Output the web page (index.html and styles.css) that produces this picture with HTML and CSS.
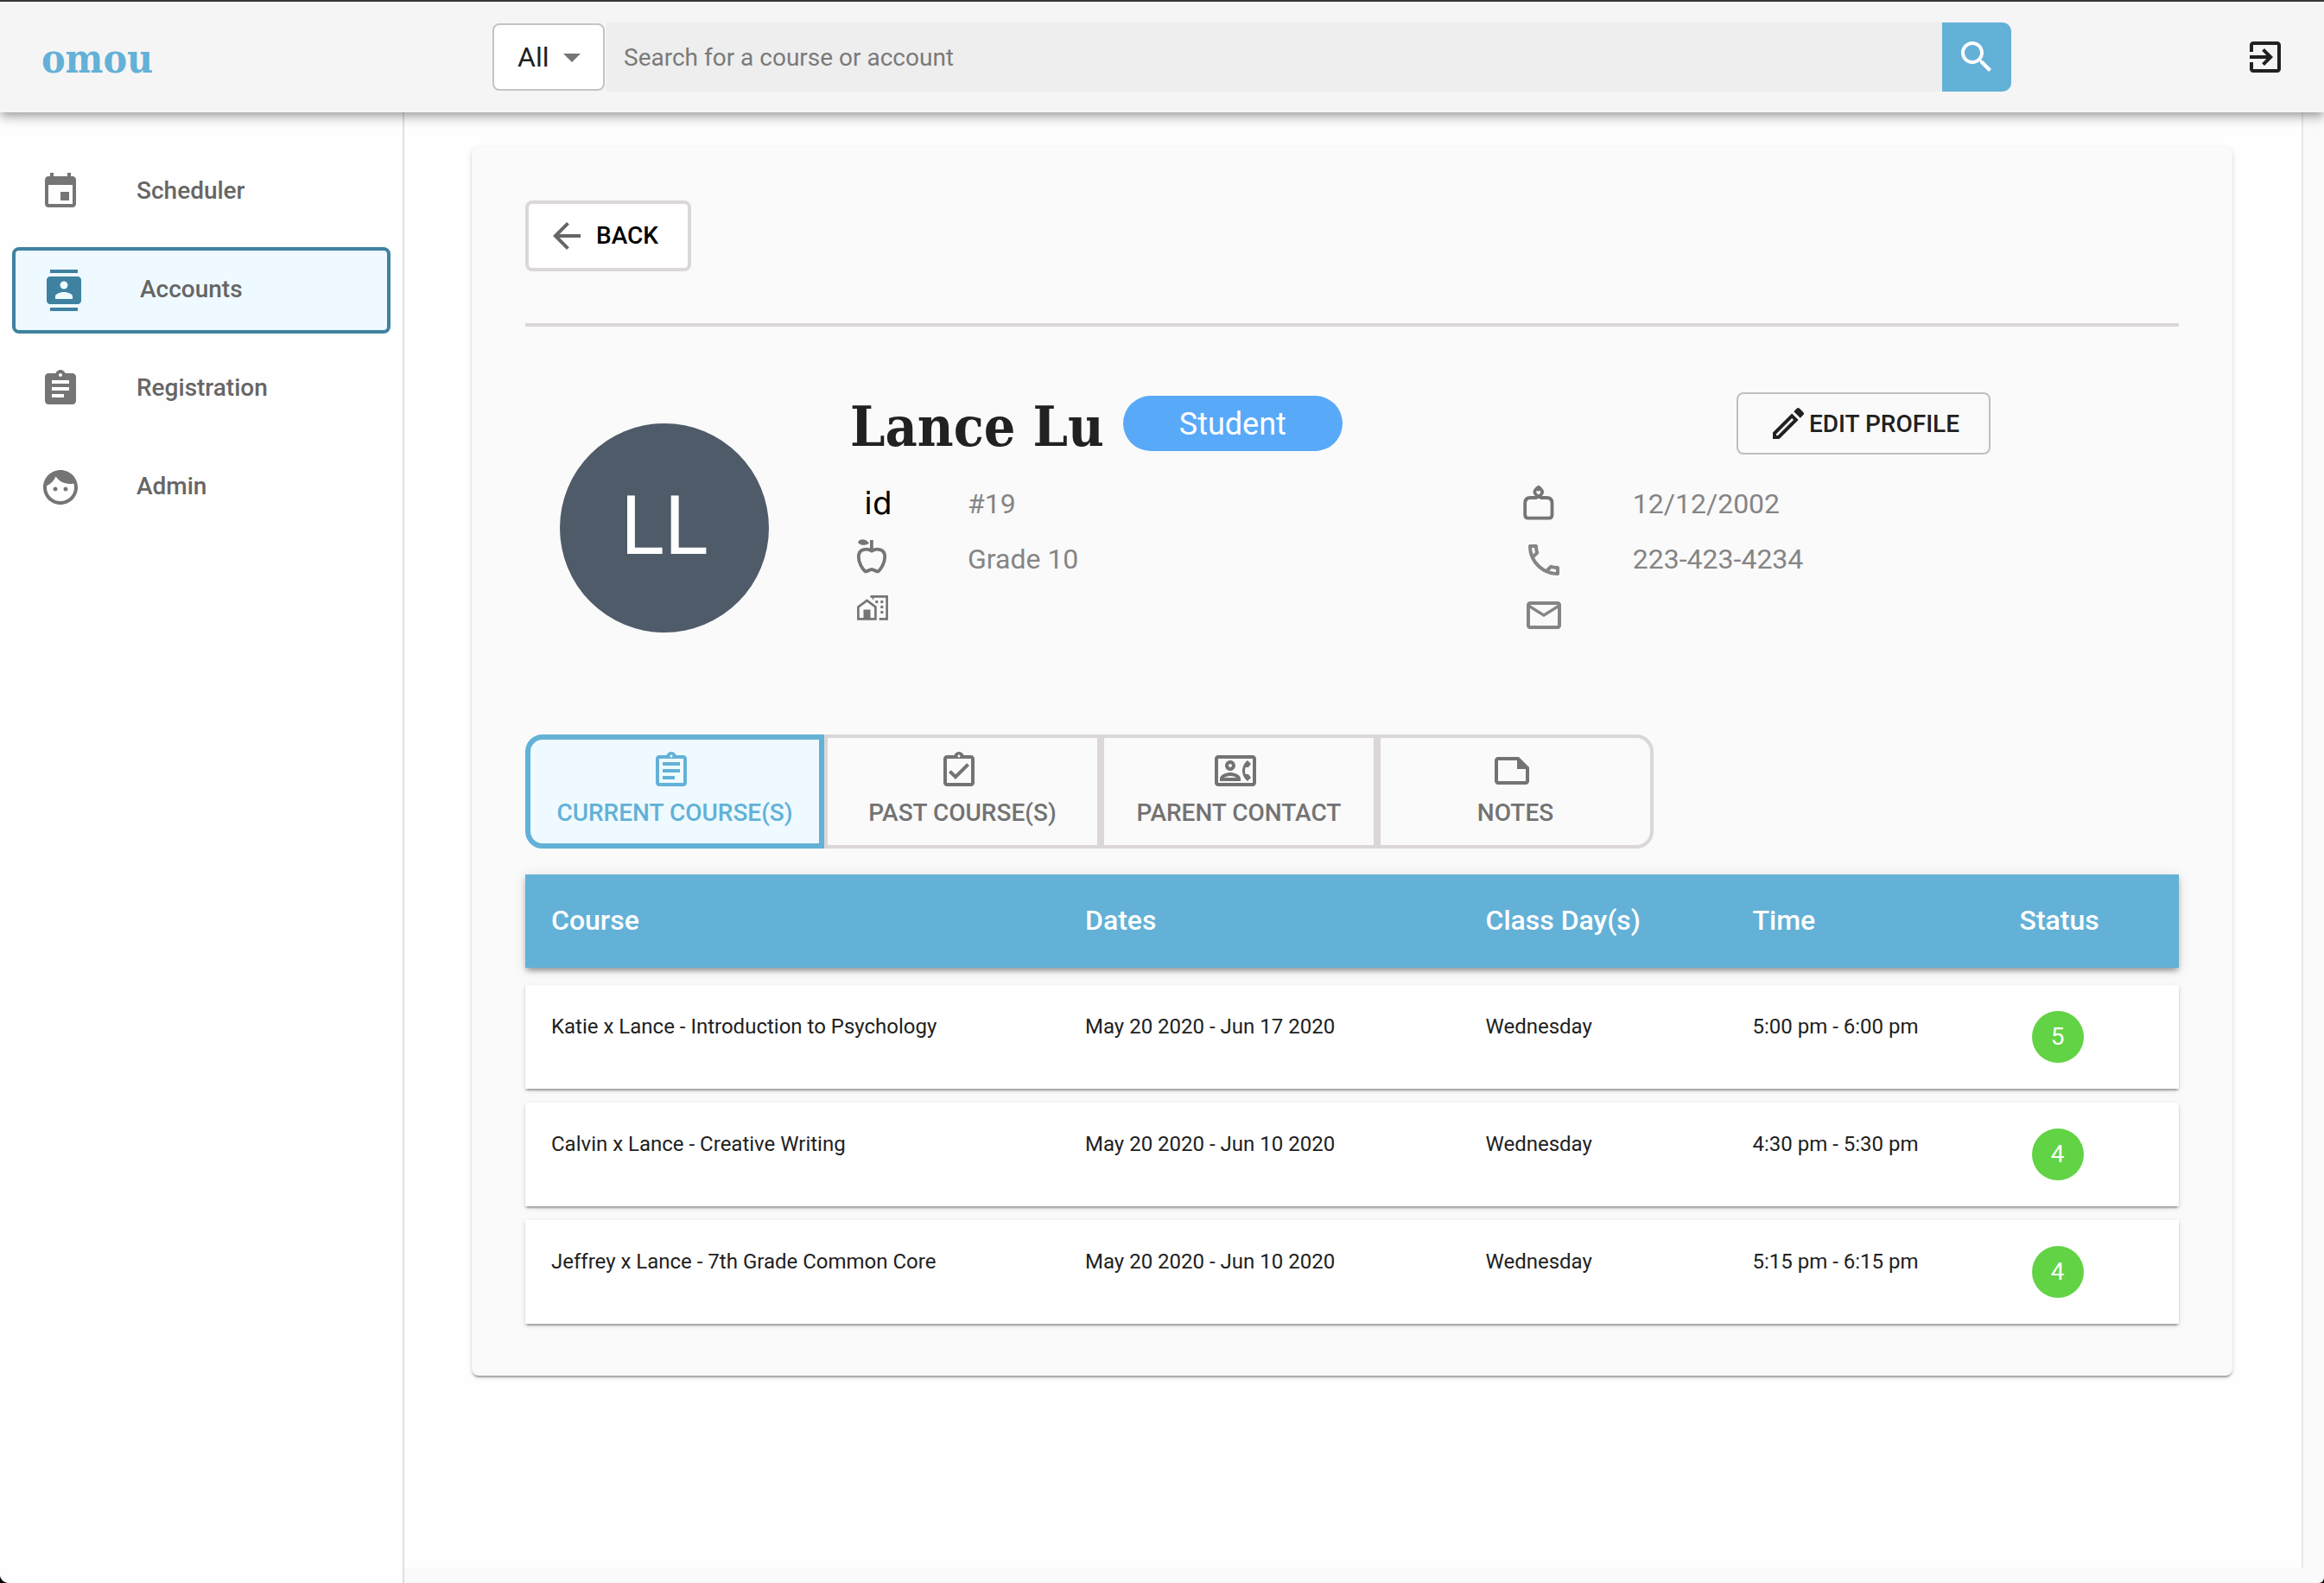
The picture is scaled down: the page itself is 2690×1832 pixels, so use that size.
FILE: index.html
```html
<!DOCTYPE html>
<html lang="en">
<head>
<meta charset="utf-8">
<meta name="viewport" content="width=device-width, initial-scale=1">
<title>omou - Lance Lu</title>
<link rel="stylesheet" href="styles.css">
</head>
<body>
<div class="app">
  <header class="topbar">
    <a class="logo" href="#">omou</a>
    <form class="search" role="search">
      <div class="search-filter">
        <select class="search-select" aria-label="Search type">
          <option>All</option>
          <option>Account</option>
          <option>Course</option>
        </select>
        <svg class="icon search-caret" viewBox="0 0 24 24" aria-hidden="true"><path d="M7 10l5 5 5-5z"/></svg>
      </div>
      <input class="search-input" type="text" placeholder="Search for a course or account" aria-label="Search for a course or account">
      <button class="search-button" type="button" aria-label="Search">
        <svg class="icon" viewBox="0 0 24 24" aria-hidden="true"><path d="M15.5 14h-.79l-.28-.27C15.41 12.59 16 11.11 16 9.5 16 5.91 13.09 3 9.5 3S3 5.91 3 9.5 5.91 16 9.5 16c1.61 0 3.09-.59 4.23-1.57l.27.28v.79l5 4.99L20.49 19l-4.99-5zm-6 0C7.01 14 5 11.99 5 9.5S7.01 5 9.5 5 14 7.01 14 9.5 11.99 14 9.5 14z"/></svg>
      </button>
    </form>
    <div class="topbar-end">
      <button class="logout" type="button" aria-label="Log out">
        <svg class="icon" viewBox="0 0 24 24" aria-hidden="true"><path d="M10.09 15.59L11.5 17l5-5-5-5-1.41 1.41L12.67 11H3v2h9.67l-2.58 2.59zM19 3H5c-1.11 0-2 .9-2 2v4h2V5h14v14H5v-4H3v4c0 1.1.89 2 2 2h14c1.1 0 2-.9 2-2V5c0-1.1-.9-2-2-2z"/></svg>
      </button>
    </div>
  </header>

  <div class="layout">
    <nav class="sidebar">
      <ul class="nav-list">
        <li><a class="nav-item" href="#">
          <svg class="icon" viewBox="0 0 24 24" aria-hidden="true"><path d="M17 12h-5v5h5v-5zM16 1v2H8V1H6v2H5c-1.11 0-1.99.9-1.99 2L3 19c0 1.1.89 2 2 2h14c1.1 0 2-.9 2-2V5c0-1.1-.9-2-2-2h-1V1h-2zm3 18H5V8h14v11z"/></svg>
          <span class="nav-label">Scheduler</span></a></li>
        <li><a class="nav-item nav-item-active" href="#" aria-current="page">
          <svg class="icon" viewBox="0 0 24 24" aria-hidden="true"><path d="M20 0H4v2h16V0zM4 24h16v-2H4v2zM20 4H4c-1.1 0-2 .9-2 2v12c0 1.1.9 2 2 2h16c1.1 0 2-.9 2-2V6c0-1.1-.9-2-2-2zm-8 2.75c1.24 0 2.25 1.01 2.25 2.25s-1.01 2.25-2.25 2.25S9.75 10.24 9.75 9 10.76 6.75 12 6.75zM17 17H7v-1.5c0-1.67 3.33-2.5 5-2.5s5 .83 5 2.5V17z"/></svg>
          <span class="nav-label">Accounts</span></a></li>
        <li><a class="nav-item" href="#">
          <svg class="icon" viewBox="0 0 24 24" aria-hidden="true"><path d="M19 3h-4.18C14.4 1.84 13.3 1 12 1c-1.3 0-2.4.84-2.82 2H5c-1.1 0-2 .9-2 2v14c0 1.1.9 2 2 2h14c1.1 0 2-.9 2-2V5c0-1.1-.9-2-2-2zm-7 0c.55 0 1 .45 1 1s-.45 1-1 1-1-.45-1-1 .45-1 1-1zm2 14H7v-2h7v2zm3-4H7v-2h10v2zm0-4H7V7h10v2z"/></svg>
          <span class="nav-label">Registration</span></a></li>
        <li><a class="nav-item" href="#">
          <svg class="icon" viewBox="0 0 24 24" aria-hidden="true"><path d="M9 11.75c-.69 0-1.25.56-1.25 1.25s.56 1.25 1.25 1.25 1.25-.56 1.25-1.25-.56-1.25-1.25-1.25zm6 0c-.69 0-1.25.56-1.25 1.25s.56 1.25 1.25 1.25 1.25-.56 1.25-1.25-.56-1.25-1.25-1.25zM12 2C6.48 2 2 6.48 2 12s4.48 10 10 10 10-4.48 10-10S17.52 2 12 2zm0 18c-4.41 0-8-3.59-8-8 0-.29.02-.58.05-.86 2.36-1.05 4.23-2.98 5.21-5.37C11.07 8.33 14.05 10 17.42 10c.78 0 1.53-.09 2.25-.26.21.71.33 1.47.33 2.26 0 4.41-3.59 8-8 8z"/></svg>
          <span class="nav-label">Admin</span></a></li>
      </ul>
    </nav>

    <main class="main">
      <section class="card">
        <button class="back" type="button">
          <svg class="icon back-icon" viewBox="0 0 24 24" aria-hidden="true"><path d="M20 11H7.83l5.59-5.59L12 4l-8 8 8 8 1.41-1.41L7.83 13H20v-2z"/></svg>
          <span class="back-label">BACK</span>
        </button>
        <hr class="divider">

        <div class="profile">
          <div class="avatar">LL</div>
          <div class="profile-info">
            <div class="profile-head">
              <h1 class="profile-name">Lance Lu</h1>
              <span class="role">Student</span>
              <button class="edit" type="button">
                <svg class="icon" viewBox="0 0 24 24" aria-hidden="true"><path d="M14.06 9.02l.92.92L5.92 19H5v-.92l9.06-9.06M17.66 3c-.25 0-.51.1-.7.29l-1.83 1.83 3.75 3.75 1.83-1.83c.39-.39.39-1.02 0-1.41l-2.34-2.34c-.2-.2-.45-.29-.71-.29zm-3.6 3.19L3 17.25V21h3.75L17.81 9.94l-3.75-3.75z"/></svg>
                EDIT PROFILE
              </button>
            </div>
            <div class="details">
              <ul class="detail-list">
                <li class="detail"><span class="detail-icon id-mark">id</span><span class="detail-text">#19</span></li>
                <li class="detail"><span class="detail-icon">
                  <svg class="icon line-icon" viewBox="0 0 48 48" aria-hidden="true">
                    <path class="solid" d="M9 5.5C11 1 18 1 22 6.5C18 10 11 9.5 9 5.5Z"/>
                    <path class="solid" d="M23 3h3.8v12H23z"/>
                    <path d="M25 15.6C20 12.5 9.8 12.5 9.8 22.5C9.8 29.5 14.5 36.8 17.5 39.2C20 40 22 37 25 37S30 40 32.5 39.2C35.5 36.8 40.2 29.5 40.2 22.5C40.2 12.5 30 12.5 25 15.6Z"/>
                  </svg></span><span class="detail-text">Grade 10</span></li>
                <li class="detail"><span class="detail-icon">
                  <svg class="icon house-icon" viewBox="0 0 48 48" aria-hidden="true">
                    <path d="M9.4 30.3V16.5L19.5 9L29.4 16.5V30.3Z"/>
                    <path d="M23.5 4.4H42.6V30.3H33.7"/>
                    <path class="solid" d="M15.5 19.5h8v11.5h-8zM23.3 3.5h4v5.3zM29.3 9h3v3h-3zM35.3 9h3v3h-3zM35.3 15h3v3h-3zM35.3 21h3v3h-3z"/>
                  </svg></span></li>
              </ul>
              <ul class="detail-list detail-list-contact">
                <li class="detail"><span class="detail-icon">
                  <svg class="icon line-icon" viewBox="0 0 48 48" aria-hidden="true">
                    <path d="M16 19V15.5C12 12.5 12.5 9.5 17.8 5.8C23 9.5 23.5 12.5 19.7 15.5V19M16 18H8.5Q2.2 18 2.2 24.5V38Q2.2 41.6 6 41.6H29.7Q33.5 41.6 33.5 38V24.5Q33.5 18 27.2 18H19.7"/>
                    <path class="solid" d="M13.5 10L17.8 4.5L22 10L19 9.5L17.8 11L16.5 9.5Z"/>
                  </svg></span><span class="detail-text">12/12/2002</span></li>
                <li class="detail"><span class="detail-icon">
                  <svg class="icon" viewBox="0 -1 24 24" aria-hidden="true"><path d="M6.54 5c.06.89.21 1.76.45 2.59l-1.2 1.2c-.41-1.2-.67-2.47-.76-3.79h1.51m9.86 12.02c.85.24 1.72.39 2.6.45v1.49c-1.32-.09-2.59-.35-3.8-.75l1.2-1.19M7.5 3H4c-.55 0-1 .45-1 1 0 9.39 7.61 17 17 17 .55 0 1-.45 1-1v-3.49c0-.55-.45-1-1-1-1.24 0-2.45-.2-3.57-.57-.1-.04-.21-.05-.31-.05-.26 0-.51.1-.71.29l-2.2 2.2c-2.83-1.45-5.15-3.76-6.59-6.59l2.2-2.2c.28-.28.36-.67.25-1.02C8.7 6.45 8.5 5.25 8.5 4c0-.55-.45-1-1-1z"/></svg></span><span class="detail-text">223-423-4234</span></li>
                <li class="detail"><span class="detail-icon">
                  <svg class="icon" viewBox="0 -1 24 24" aria-hidden="true"><path d="M20 4H4c-1.1 0-1.99.9-1.99 2L2 18c0 1.1.9 2 2 2h16c1.1 0 2-.9 2-2V6c0-1.1-.9-2-2-2zm0 14H4V8l8 5 8-5v10zm-8-7L4 6h16l-8 5z"/></svg></span></li>
              </ul>
            </div>
          </div>
        </div>

        <div class="tabs" role="tablist">
          <button class="tab tab-active" type="button" role="tab" aria-selected="true">
            <svg class="icon tab-icon" viewBox="0 0 24 24" aria-hidden="true"><path d="M7 15h7v2H7zm0-4h10v2H7zm0-4h10v2H7zM19 3h-4.18C14.4 1.84 13.3 1 12 1c-1.3 0-2.4.84-2.82 2H5c-1.1 0-2 .9-2 2v14c0 1.1.9 2 2 2h14c1.1 0 2-.9 2-2V5c0-1.1-.9-2-2-2zm-7-.25c.41 0 .75.34.75.75s-.34.75-.75.75-.75-.34-.75-.75.34-.75.75-.75zM19 19H5V5h14v14z"/></svg>
            CURRENT COURSE(S)
          </button>
          <button class="tab" type="button" role="tab" aria-selected="false">
            <svg class="icon tab-icon" viewBox="0 0 24 24" aria-hidden="true"><path d="M18 9l-1.41-1.42L10 14.17l-2.59-2.58L6 13l4 4zM19 3h-4.18C14.4 1.84 13.3 1 12 1c-1.3 0-2.4.84-2.82 2H5c-1.1 0-2 .9-2 2v14c0 1.1.9 2 2 2h14c1.1 0 2-.9 2-2V5c0-1.1-.9-2-2-2zm-7-.25c.41 0 .75.34.75.75s-.34.75-.75.75-.75-.34-.75-.75.34-.75.75-.75zM19 19H5V5h14v14z"/></svg>
            PAST COURSE(S)
          </button>
          <button class="tab" type="button" role="tab" aria-selected="false">
            <svg class="icon tab-icon" viewBox="0 0 24 24" aria-hidden="true"><path d="M22 3H2C.9 3 0 3.9 0 5v14c0 1.1.9 2 2 2h20c1.1 0 1.99-.9 1.99-2L24 5c0-1.1-.9-2-2-2zm0 16H2V5h20v14zm-2.99-1.01L21 16l-1.51-2h-1.64c-.22-.63-.35-1.3-.35-2s.13-1.37.35-2h1.64L21 8l-1.99-1.99c-1.31.98-2.28 2.37-2.73 3.99-.18.64-.28 1.31-.28 2s.1 1.36.28 2c.45 1.61 1.42 3.01 2.73 3.99zM9 12c1.65 0 3-1.35 3-3s-1.35-3-3-3-3 1.35-3 3 1.35 3 3 3zm0-4c.55 0 1 .45 1 1s-.45 1-1 1-1-.45-1-1 .45-1 1-1zm6 8.59c0-2.5-3.97-3.58-6-3.58s-6 1.08-6 3.58V18h12v-1.41zM5.48 16c.74-.5 2.22-1 3.52-1s2.77.49 3.52 1H5.48z"/></svg>
            PARENT CONTACT
          </button>
          <button class="tab" type="button" role="tab" aria-selected="false">
            <svg class="icon tab-icon" viewBox="0 0 24 24" aria-hidden="true"><path d="M16 4H4c-1.1 0-2 .9-2 2v12.01c0 1.1.9 1.99 2 1.99h16c1.1 0 2-.9 2-2v-8l-6-6zM4 18.01V6h11v5h5v7.01H4z"/></svg>
            NOTES
          </button>
        </div>

        <table class="courses">
          <thead>
            <tr class="courses-head">
              <th scope="col">Course</th><th scope="col">Dates</th><th scope="col">Class Day(s)</th><th scope="col">Time</th><th scope="col">Status</th>
            </tr>
          </thead>
          <tbody class="courses-body">
            <tr class="course">
              <td>Katie x Lance - Introduction to Psychology</td><td>May 20 2020 - Jun 17 2020</td><td>Wednesday</td><td>5:00 pm - 6:00 pm</td><td><span class="status">5</span></td>
            </tr>
            <tr class="course">
              <td>Calvin x Lance - Creative Writing</td><td>May 20 2020 - Jun 10 2020</td><td>Wednesday</td><td>4:30 pm - 5:30 pm</td><td><span class="status">4</span></td>
            </tr>
            <tr class="course">
              <td>Jeffrey x Lance - 7th Grade Common Core</td><td>May 20 2020 - Jun 10 2020</td><td>Wednesday</td><td>5:15 pm - 6:15 pm</td><td><span class="status">4</span></td>
            </tr>
          </tbody>
        </table>
      </section>
    </main>
  </div>
</div>
</body>
</html>
```
FILE: styles.css
```css
:root {
  --blue: #63b1d7;
  --blue-dark: #3f81a0;
  --blue-pale: #eefaff;
  --line: #dbd7d7;
  --ink: #212121;
  --muted: #737373;
  --slab: "Roboto Slab", "DejaVu Serif Condensed", "DejaVu Serif", serif;
}

* {
  box-sizing: border-box;
}

html {
  background: #000;
}

body {
  margin: 0;
  color: var(--ink);
  font-family: Roboto, "Liberation Sans", sans-serif;
  font-size: 28px;
}

button,
input,
select {
  margin: 0;
  font: inherit;
}

button {
  cursor: pointer;
}

ul {
  margin: 0;
  padding: 0;
  list-style: none;
}

.icon {
  display: block;
  flex: none;
  width: 48px;
  height: 48px;
  fill: currentColor;
}

.app {
  display: flex;
  flex-direction: column;
  min-height: 100vh;
  overflow: hidden;
  border-top: 2px solid #383838;
  border-radius: 0 0 6px 10px;
  background: #fafafa;
}

/* Top bar */
.topbar {
  z-index: 1;
  display: grid;
  grid-template-columns: 570px 1fr 362px;
  align-items: center;
  height: 128px;
  background: #f5f5f5;
  box-shadow: 0 4px 8px -2px rgba(0, 0, 0, .2), 0 8px 10px rgba(0, 0, 0, .14), 0 2px 20px rgba(0, 0, 0, .12);
}

.logo {
  padding: 4px 0 0 48px;
  color: var(--blue);
  font-family: var(--slab);
  font-size: 46px;
  font-weight: 700;
  text-decoration: none;
}

.search {
  display: flex;
  align-items: center;
  height: 80px;
}

.search-filter {
  position: relative;
  flex: none;
  width: 130px;
}

.search-select {
  display: block;
  width: 100%;
  height: 78px;
  padding: 0 0 0 27px;
  border: 2px solid #c4c4c4;
  border-radius: 8px;
  background: #fff;
  color: var(--ink);
  font-size: 32px;
  appearance: none;
}

.search-caret {
  position: absolute;
  top: 15px;
  right: 14px;
  color: #757575;
  pointer-events: none;
}

.search-input {
  flex: 1;
  min-width: 0;
  height: 80px;
  margin-left: 2px;
  padding: 0 20px;
  border: 0;
  background: #eee;
  color: var(--ink);
}

.search-input::placeholder {
  color: #7a7a7a;
  opacity: 1;
}

.search-button {
  display: grid;
  place-items: center;
  width: 80px;
  height: 80px;
  padding: 0;
  border: 0;
  border-radius: 0 10px 10px 0;
  background: var(--blue);
  color: #fff;
}

.topbar-end {
  display: flex;
  justify-content: flex-end;
  padding-right: 44px;
}

.logout {
  padding: 0;
  border: 0;
  background: none;
  color: var(--ink);
}

/* Page frame */
.layout {
  display: flex;
  flex: 1;
}

.sidebar {
  flex: none;
  width: 468px;
  padding: 42px 14px;
  border-right: 2px solid #e0e0e0;
  background: #fefefe;
}

.nav-list {
  display: grid;
  gap: 14px;
}

.nav-item {
  display: flex;
  align-items: center;
  gap: 64px;
  height: 100px;
  padding: 0 32px;
  border-radius: 8px;
  color: #757575;
  font-weight: 500;
  text-decoration: none;
}

.nav-item-active {
  border: 4px solid var(--blue-dark);
  background: var(--blue-pale);
  color: var(--blue-dark);
}

.nav-label {
  padding-bottom: 4px;
  color: #666;
}

.main {
  flex: 1;
  min-width: 0;
  margin: 0 24px 18px 0;
  padding: 40px 80px 0 78px;
  border-right: 2px solid #e8e8e8;
  background: #fefefe;
}

.card {
  padding: 62px 62px 60px;
  border-radius: 8px;
  background: #fafafa;
  box-shadow: 0 4px 2px -2px rgba(0, 0, 0, .2), 0 2px 2px rgba(0, 0, 0, .14), 0 2px 6px rgba(0, 0, 0, .12);
}

.back {
  display: flex;
  align-items: center;
  gap: 10px;
  min-width: 192px;
  height: 82px;
  padding: 0 20px;
  border: 4px solid var(--line);
  border-radius: 8px;
  background: #fff;
  color: #000;
  font-weight: 500;
}

.back-icon {
  color: #666;
}

.back-label {
  padding-bottom: 2px;
}

.divider {
  height: 4px;
  margin: 60px 0 76px;
  border: 0;
  background: var(--line);
}

/* Profile */
.profile {
  display: flex;
  align-items: flex-start;
  padding: 0 218px 0 40px;
}

.avatar {
  display: grid;
  flex: none;
  place-items: center;
  width: 242px;
  height: 242px;
  margin: 36px 94px 0 0;
  padding-bottom: 4px;
  border-radius: 50%;
  background: #4f5b69;
  color: #fff;
  font-size: 94px;
}

.profile-info {
  flex: 1;
}

.profile-head {
  display: flex;
  align-items: center;
  height: 72px;
}

.profile-name {
  margin: 0 22px 0 0;
  padding-top: 8px;
  font-family: var(--slab);
  font-size: 64px;
  font-weight: 700;
  line-height: 72px;
}

.role {
  height: 64px;
  padding: 0 65px;
  border-radius: 32px;
  background: #59a9f9;
  color: #fff;
  font-size: 36px;
  line-height: 66px;
}

.edit {
  display: flex;
  align-items: center;
  justify-content: center;
  min-width: 294px;
  height: 72px;
  margin-left: auto;
  padding: 0 28px;
  border: 2px solid #bfbfbf;
  border-radius: 8px;
  background: transparent;
  color: var(--ink);
  font-weight: 500;
}

.details {
  display: grid;
  grid-template-columns: 59fr 41fr;
  margin-top: 24px;
}

.detail {
  display: flex;
  align-items: center;
  height: 64px;
  color: #858585;
  font-size: 32px;
}

.detail-icon {
  flex: none;
  width: 136px;
}

.detail-text {
  padding-top: 2px;
}

.detail-list-contact .detail-icon {
  width: 127px;
}

.id-mark {
  padding-left: 16px;
  color: #000;
  font-family: "DejaVu Sans", sans-serif;
  font-size: 36px;
}

.line-icon,
.house-icon {
  fill: none;
  stroke: #757575;
  stroke-width: 3.8;
}

.house-icon {
  stroke-width: 2.7;
}

.solid {
  fill: #757575;
  stroke: none;
}

/* Tabs */
.tabs {
  display: flex;
  margin: 108px 0 30px;
}

.tab {
  display: flex;
  flex-direction: column;
  align-items: center;
  gap: 8px;
  width: 320px;
  height: 132px;
  padding: 14px 0 0;
  border: 4px solid var(--line);
  background: transparent;
  color: var(--muted);
  font-weight: 500;
  line-height: 34px;
}

.tab:last-child {
  border-radius: 0 20px 20px 0;
}

.tab-active {
  width: 346px;
  padding-top: 12px;
  border: 6px solid var(--blue);
  border-radius: 20px 0 0 20px;
  background: var(--blue-pale);
  color: var(--blue);
}

.tab-icon {
  margin-right: 8px;
}

/* Course table */
.courses,
.courses-body {
  display: grid;
}

.courses {
  gap: 20px;
}

.courses-body {
  gap: 16px;
}

.courses-head,
.course {
  display: grid;
  grid-template-columns: 4fr 3fr 2fr 2fr 1fr;
  padding: 0 30px;
}

.courses-head {
  align-items: center;
  height: 108px;
  background: var(--blue);
  box-shadow: 0 6px 6px -4px rgba(0, 0, 0, .2), 0 4px 6px rgba(0, 0, 0, .2), 0 2px 14px rgba(0, 0, 0, .12);
  color: #fff;
  font-size: 32px;
}

.courses th {
  padding: 0 0 2px;
  font-weight: 500;
  line-height: 40px;
  text-align: left;
}

.course {
  min-height: 120px;
  padding-top: 30px;
  background: #fff;
  box-shadow: 0 4px 2px -2px rgba(0, 0, 0, .2), 0 2px 2px rgba(0, 0, 0, .14), 0 2px 6px rgba(0, 0, 0, .12);
  font-size: 24px;
}

.course td {
  padding: 0;
  line-height: 36px;
}

.status {
  display: block;
  width: 60px;
  height: 60px;
  margin-left: 14px;
  border-radius: 50%;
  background: #61d345;
  color: #fff;
  font-size: 28px;
  line-height: 60px;
  text-align: center;
}
```
